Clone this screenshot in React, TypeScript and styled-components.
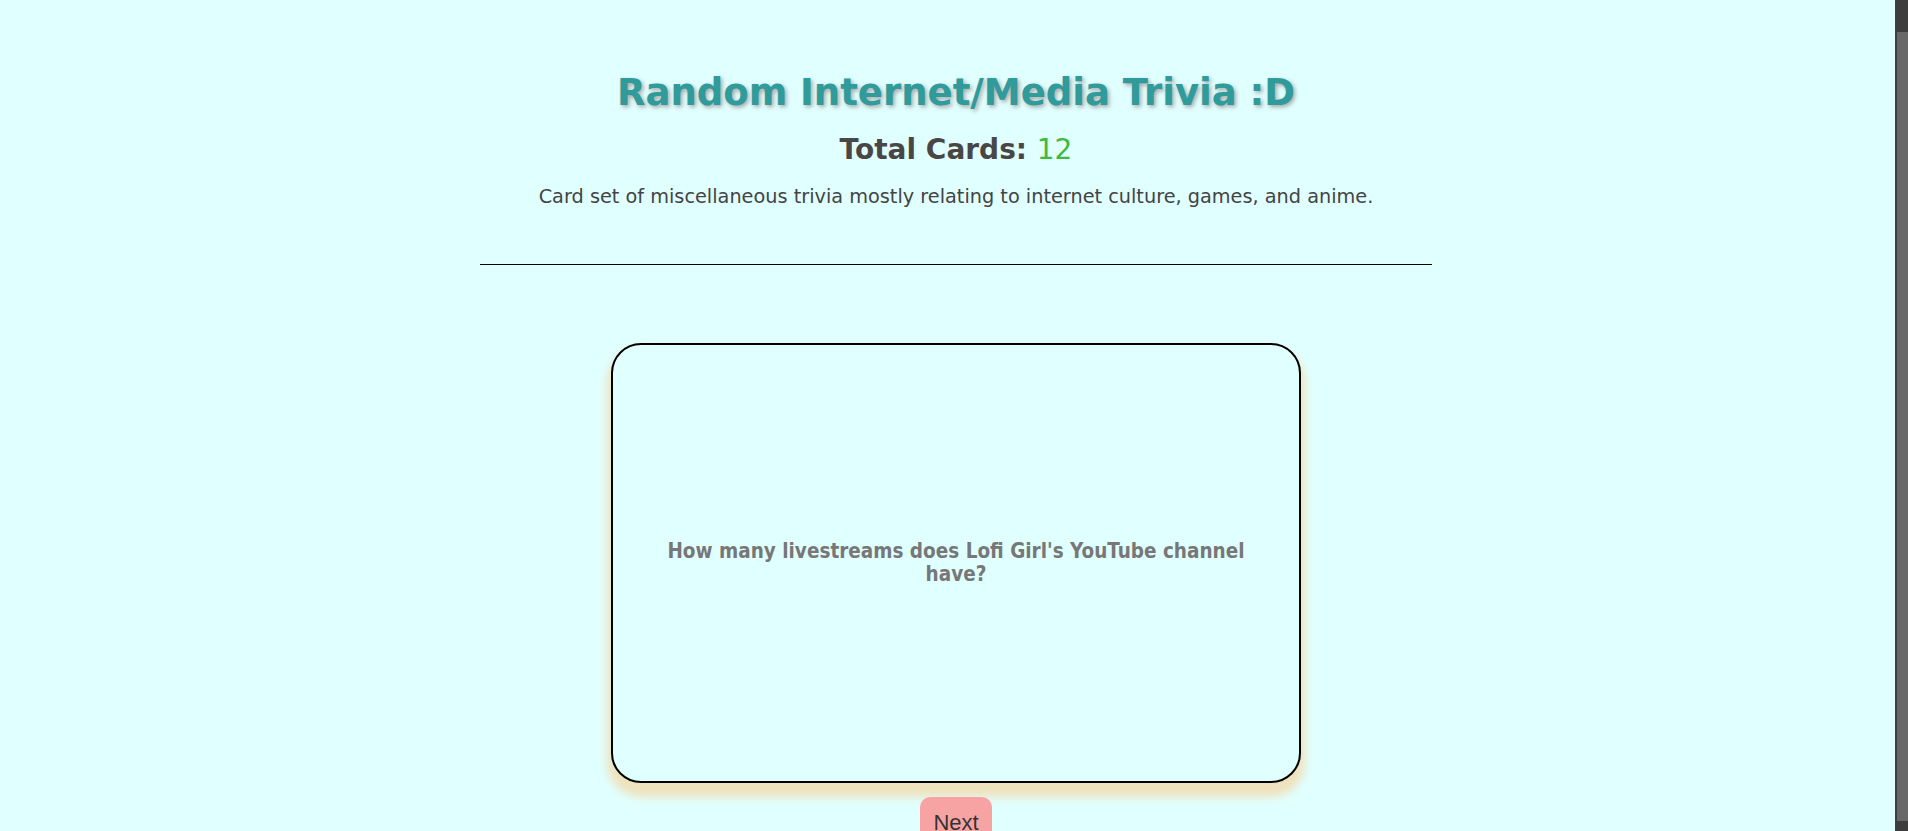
import React from "react";
import styled, { createGlobalStyle } from "styled-components";

const GlobalStyle = createGlobalStyle`
  html, body {
    background: #e0ffff;
  }
  body {
    margin: 0;
    font-family: "DejaVu Sans", sans-serif;
  }
`;

const Page = styled.div`
  display: flex;
  flex-direction: column;
  align-items: center;
  padding: 71px 0 24px 4px;
`;

const Title = styled.h1`
  margin: 0;
  font-size: 37px;
  font-weight: bold;
  color: #2f9b9b;
  text-shadow: 2px 2px 4px #a6a6a6;
  line-height: 44px;
`;

const Count = styled.h2`
  margin: 17.5px 0 0;
  font-size: 28px;
  line-height: 34px;
  font-weight: bold;
  color: #4a4646;
`;

const Num = styled.span`
  color: #3fba3f;
  font-weight: normal;
`;

const Desc = styled.p`
  margin: 18px 0 0;
  font-size: 19.3px;
  line-height: 23px;
  color: #444;
`;

const Rule = styled.hr`
  width: 952px;
  margin: 56px 0 0;
  border: none;
  border-top: 1px solid #000;
`;

const Card = styled.div`
  margin-top: 78px;
  width: 690px;
  height: 440px;
  box-sizing: border-box;
  border: 2px solid #000;
  border-radius: 30px;
  background: #e0ffff;
  box-shadow: 0 10px 10px 4px #efe2bd;
  display: flex;
  align-items: center;
  justify-content: center;
  padding: 0 50px;
  text-align: center;
`;

const Question = styled.p`
  margin: 0;
  font-family: "DejaVu Sans Condensed", "DejaVu Sans", sans-serif;
  font-stretch: condensed;
  font-size: 20.5px;
  line-height: 23px;
  font-weight: bold;
  color: #777;
`;

const NextButton = styled.button`
  margin-top: 14px;
  padding: 13px 13px 10px;
  border: none;
  border-radius: 10px;
  background: #f8a3a3;
  color: #333;
  font-family: "Liberation Sans", Arial, sans-serif;
  font-size: 22px;
  cursor: pointer;
`;

const ScrollTrack = styled.div`
  position: fixed;
  top: 0;
  right: 0;
  width: 13px;
  height: 100vh;
  background: #3d3d3d;
  display: flex;
  flex-direction: column;
  align-items: flex-end;
  padding-top: 32px;
  padding-bottom: 10px;
  box-sizing: border-box;
`;

const ScrollThumb = styled.div`
  width: 11px;
  flex: 1;
  background: #686868;
`;

export default function App() {
  return (
    <>
      <GlobalStyle />
      <Page>
        <Title>Random Internet/Media Trivia :D</Title>
        <Count>
          Total Cards: <Num>12</Num>
        </Count>
        <Desc>
          Card set of miscellaneous trivia mostly relating to internet culture, games, and anime.
        </Desc>
        <Rule />
        <Card>
          <Question>How many livestreams does Lofi Girl's YouTube channel have?</Question>
        </Card>
        <NextButton>Next</NextButton>
      </Page>
      <ScrollTrack>
        <ScrollThumb />
      </ScrollTrack>
    </>
  );
}
